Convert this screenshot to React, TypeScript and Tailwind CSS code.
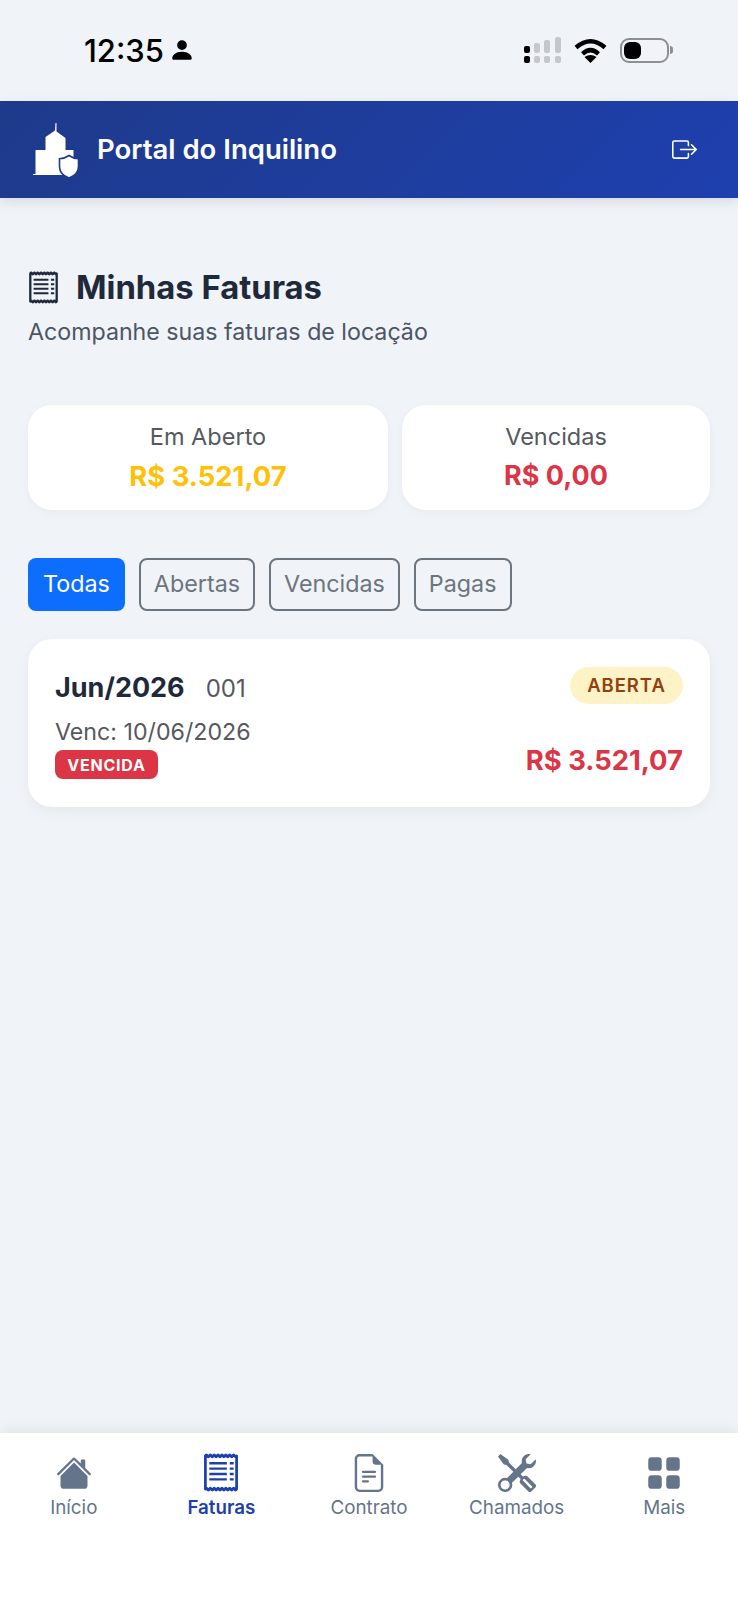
import React from 'react';
import {
  BsBoxArrowRight,
  BsFileEarmarkText,
  BsGridFill,
  BsHouseFill,
  BsPersonFill,
  BsTools,
} from 'react-icons/bs';

const ReceiptIcon = ({ className }: { className?: string }) => (
  <svg className={className} viewBox="0 0 36 40" fill="none" stroke="currentColor" strokeWidth="2.800">
    <path
      d={`M2 3q1-2 2 0${' t2 0'.repeat(15)}V37q-1 2-2 0${' t-2 0'.repeat(15)}Z`}
      strokeLinejoin="round"
    />
    <path d="M6 10.500h18M6 16h18M6 21.500h18M6 27h18M27 10.500h4M27 16h4M27 21.500h4M27 27h4" strokeWidth="2.400" />
  </svg>
);

const navItems = [
  { label: 'Início', icon: BsHouseFill, size: 'h-[36px] w-[36px]' },
  { label: 'Faturas', icon: ReceiptIcon, size: 'h-[39px] w-[36px]', active: true },
  { label: 'Contrato', icon: BsFileEarmarkText, size: 'h-[38px] w-[38px]' },
  { label: 'Chamados', icon: BsTools, size: 'h-[38px] w-[38px]' },
  { label: 'Mais', icon: BsGridFill, size: 'h-[36px] w-[36px]' },
];

const filters = ['Abertas', 'Vencidas', 'Pagas'];

const SignalIcon = () => (
  <svg width="38" height="26" viewBox="0 0 38 26" fill="#c4c7cc">
    <rect x="1" y="9" width="6" height="7" rx="2" fill="#000" />
    <rect x="1" y="19" width="6" height="7" rx="2" fill="#000" />
    <rect x="11" y="6" width="6" height="10" rx="2" />
    <rect x="11" y="19" width="6" height="7" rx="2" />
    <rect x="21" y="3" width="6" height="13" rx="2" />
    <rect x="21" y="19" width="6" height="7" rx="2" />
    <rect x="32" y="0" width="6" height="16" rx="2" />
    <rect x="32" y="19" width="6" height="7" rx="2" />
  </svg>
);

const WifiIcon = () => (
  <svg width="33" height="25" viewBox="0 0 33 25" fill="none" stroke="#000" strokeWidth="4.400">
    <path d="M2 9.500Q16.500-3 31 9.500" />
    <path d="M8.500 15.800Q16.500 8.500 24.500 15.800" />
    <path d="M16.500 25l-6-6q6-4 12 0z" fill="#000" stroke="none" />
  </svg>
);

const BatteryIcon = () => (
  <div className="flex items-center gap-[1px]">
    <div className="h-[25px] w-[49px] rounded-[9px] border-[2px] border-[#8d8f93] p-[2px]">
      <div className="h-full w-[17px] rounded-[6px] bg-black" />
    </div>
    <div className="h-[8px] w-[3px] rounded-r-full bg-[#8d8f93]" />
  </div>
);

const BuildingLogo = () => (
  <svg width="50" height="58" viewBox="0 0 50 58">
    <path
      fill="#fff"
      d="M24.500 2h1v8.500l9 6.500v12h8v16l-4 4v5h-36.500v-1h2.500v-24h10v-13l9.500-6.500z"
    />
    <path
      fill="#fff"
      stroke="#1e3a8a"
      strokeWidth="1.600"
      d="M38 34.500c3 2.200 6 3 9.500 3.200v7.800c0 5.500-4.200 9.600-9.500 11.500-5.300-1.900-9.500-6-9.500-11.500v-7.800c3.500-.2 6.500-1 9.500-3.200z"
    />
  </svg>
);

const App = () => {
  return (
    <div className="flex h-[1600px] w-full flex-col bg-[#f0f3f8] font-['Inter',sans-serif]">
      <div className="flex h-[101px] items-center justify-between pb-[1px] pl-[84px] pr-[65px]">
        <div className="flex items-center gap-[5px]">
          <span className="text-[31px] font-medium leading-none text-black">12:35</span>
          <BsPersonFill className="h-[26px] w-[26px] text-black" />
        </div>
        <div className="flex items-center gap-[13px]">
          <SignalIcon />
          <WifiIcon />
          <BatteryIcon />
        </div>
      </div>

      <header className="flex h-[97px] items-center justify-between bg-[linear-gradient(135deg,#1e3a8a,#1e40af)] pl-[31px] pr-[41px] shadow-[0_4px_12px_rgba(0,0,0,0.1)]">
        <div className="flex items-center gap-[16px]">
          <BuildingLogo />
          <span className="text-[27.500px] font-semibold leading-none text-white">Portal do Inquilino</span>
        </div>
        <BsBoxArrowRight className="h-[25px] w-[25px] text-white" />
      </header>

      <main className="flex-1 px-[28px] pt-[67px]">
        <div className="flex items-center gap-[17px]">
          <ReceiptIcon className="h-[33px] w-[31px] text-[#1e293b]" />
          <h1 className="text-[32.800px] font-bold leading-[44px] text-[#1e293b]">Minhas Faturas</h1>
        </div>
        <p className="mt-[5px] text-[23.200px] leading-[36px] text-[#4b5563]">Acompanhe suas faturas de locação</p>

        <div className="mt-[55px] flex gap-[14px]">
          <div className="flex h-[105px] w-[360px] flex-col items-center justify-center gap-[5px] rounded-[24px] bg-white shadow-[0_2px_10px_rgba(0,0,0,0.04)]">
            <span className="text-[23.500px] leading-[32px] text-[#55595f]">Em Aberto</span>
            <span className="text-[27.400px] font-bold leading-[36px] text-[#ffc107]">R$ 3.521,07</span>
          </div>
          <div className="flex h-[105px] flex-1 flex-col items-center justify-center gap-[5px] rounded-[24px] bg-white shadow-[0_2px_10px_rgba(0,0,0,0.04)]">
            <span className="text-[23.500px] leading-[32px] text-[#55595f]">Vencidas</span>
            <span className="text-[27px] font-bold leading-[36px] text-[#dc3545]">R$ 0,00</span>
          </div>
        </div>

        <div className="mt-[48px] flex gap-[14px]">
          <button className="h-[53px] rounded-[8px] bg-[#0d6efd] px-[15px] text-[23.300px] text-white">Todas</button>
          {filters.map((filter) => (
            <button
              key={filter}
              className="h-[53px] rounded-[8px] border-[2px] border-[#6c757d] px-[13px] text-[23.300px] text-[#6c757d]"
            >
              {filter}
            </button>
          ))}
        </div>

        <div className="mt-[28px] flex h-[168px] flex-col justify-between rounded-[24px] bg-white px-[27px] pb-[28px] pt-[28px] shadow-[0_4px_14px_rgba(0,0,0,0.05)]">
          <div className="flex items-start justify-between">
            <div className="flex items-baseline gap-[21px] pt-[1px]">
              <span className="text-[27px] font-bold leading-[40px] text-[#1e293b]">Jun/2026</span>
              <span className="text-[24px] leading-[32px] text-[#55595f]">001</span>
            </div>
            <span className="flex h-[37px] w-[113px] items-center justify-center rounded-full bg-[#fef3c7] text-[18.500px] font-semibold tracking-[0.05em] text-[#92400e]">
              ABERTA
            </span>
          </div>
          <div className="flex items-end justify-between">
            <div className="flex flex-col items-start">
              <span className="mb-[2px] text-[23.200px] leading-[32px] text-[#55595f]">Venc: 10/06/2026</span>
              <span className="flex h-[29px] w-[103px] items-center justify-center rounded-[8px] bg-[#dc3545] text-[16px] font-bold tracking-[0.05em] text-white">
                VENCIDA
              </span>
            </div>
            <span className="pb-[1px] text-[27.400px] font-bold leading-[36px] text-[#dc3545]">R$ 3.521,07</span>
          </div>
        </div>
      </main>

      <nav className="grid h-[167px] grid-cols-5 bg-white pt-[20px] shadow-[0_-4px_12px_rgba(0,0,0,0.06)]">
        {navItems.map(({ label, icon: Icon, size, active }) => (
          <div key={label} className="flex flex-col items-center">
            <div className="flex h-[39px] items-center justify-center">
              <Icon className={`${size} ${active ? 'text-[#1e40af]' : 'text-[#64748b]'}`} />
            </div>
            <span
              className={`mt-[4px] text-[18.800px] leading-[24px] ${active ? 'font-semibold text-[#1e40af]' : 'text-[#64748b]'}`}
            >
              {label}
            </span>
          </div>
        ))}
      </nav>
    </div>
  );
};

export default App;
